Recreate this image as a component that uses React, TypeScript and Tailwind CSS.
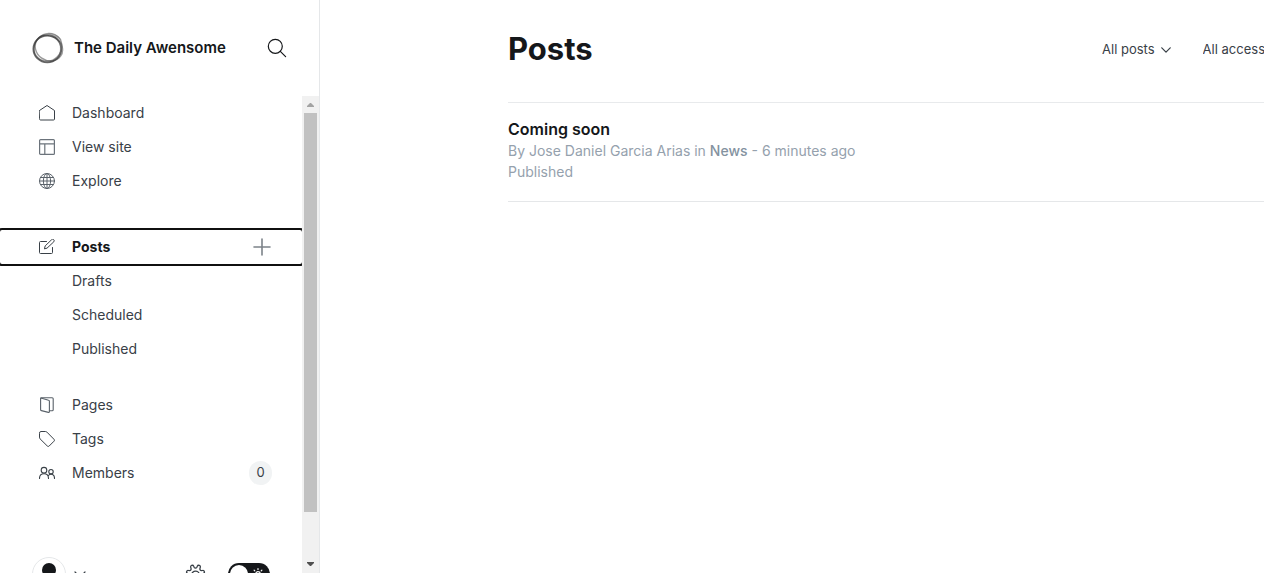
import React from 'react';

type IconProps = { className?: string; children: React.ReactNode; box?: string; weight?: number };

function Icon({ className = 'size-4', children, box = '0 0 16 16', weight = 1 }: IconProps) {
  return (
    <svg
      className={`shrink-0 ${className}`}
      viewBox={box}
      fill="none"
      stroke="currentColor"
      strokeWidth={weight}
      strokeLinecap="round"
      strokeLinejoin="round"
      aria-hidden="true"
    >
      {children}
    </svg>
  );
}

const HomeIcon = () => (
  <Icon>
    <path d="M.5 5.500 8 .5l7.500 5v8.500a1 1 0 0 1-1 1h-13a1 1 0 0 1-1-1Z" />
  </Icon>
);

const LayoutIcon = () => (
  <Icon className="size-4 text-[#6b737b]" weight={1.2}>
    <rect x=".6" y=".6" width="14.800" height="14.800" rx="1" />
    <path d="M.5 4.800h15M5.800 4.800v10.500" />
  </Icon>
);

const GlobeIcon = () => (
  <Icon className="size-4 text-[#5a626a]">
    <circle cx="8" cy="8" r="7.500" />
    <ellipse cx="8" cy="8" rx="3.600" ry="7.500" />
    <path d="M8 .5v15M.5 8h15M1.600 4.500h12.800M1.600 11.500h12.800" />
  </Icon>
);

const EditIcon = () => (
  <Icon className="size-4 text-[#394047]">
    <path d="M7.500 2.500h-6a1 1 0 0 0-1 1v10a1 1 0 0 0 1 1h11a1 1 0 0 0 1-1v-5" />
    <path d="M5.500 9.500 6.200 6.900 12.500.8a1.500 1.500 0 0 1 2.300 2L8.300 8.900Z" />
  </Icon>
);

const PagesIcon = () => (
  <Icon className="size-4 text-[#5a626a]" weight={1.1}>
    <path d="M1.600 1.400v11.200a1 1 0 0 0 .8 1l7 1.800a.8.800 0 0 0 1-.8V4.200a1 1 0 0 0-.8-1L1.900 1Z" />
    <path d="M1.900 1a1 1 0 0 1 .6-.3h10.700a1 1 0 0 1 1 1v11a1 1 0 0 1-1 1h-2.800" />
  </Icon>
);

const TagIcon = () => (
  <Icon>
    <path d="M.5 1.900A1.400 1.400 0 0 1 1.900.5h4.600a2 2 0 0 1 1.400.6l7.100 7.200a1.300 1.300 0 0 1 0 1.900l-4.800 4.800a1.300 1.300 0 0 1-1.900 0L1.100 7.900a2 2 0 0 1-.6-1.400Z" />
  </Icon>
);

const MembersIcon = () => (
  <Icon weight={1.1}>
    <circle cx="5" cy="5.200" r="2.800" />
    <circle cx="12" cy="6.700" r="2.200" />
    <path d="M.5 13.500c0-3 1.900-4.700 4.500-4.700s4.500 1.700 4.500 4.700M9.500 10.500c.6-.8 1.400-1.200 2.500-1.200 2 0 3.500 1.500 3.500 4.200" />
  </Icon>
);

const ChevronIcon = ({ className = '' }: { className?: string }) => (
  <Icon className={`h-1.5 w-2.5 ${className}`} box="0 0 10 6" weight={1.2}>
    <path d="m.8.800 4.200 4.400L9.200.8" />
  </Icon>
);

const RingLogo = () => (
  <svg className="size-8 shrink-0" viewBox="0 0 32 32" fill="none" stroke="#333" aria-hidden="true">
    <ellipse cx="15.300" cy="16.900" rx="13.900" ry="13.400" strokeWidth="1.800" strokeOpacity=".75" />
    <ellipse cx="16.700" cy="15.500" rx="14.300" ry="12.400" strokeWidth="1.400" strokeOpacity=".5" transform="rotate(35 16 16)" />
    <ellipse cx="16.500" cy="15.500" rx="14.500" ry="13.200" strokeWidth="1.200" strokeOpacity=".5" transform="rotate(-45 16 16)" />
    <path d="M16 1.500c6-.6 11 1.500 14 7-3.300-2.600-8-4.400-13-4.700ZM28.500 9c2.500 4.500 2.400 10-1.600 15 1.300-4.600 1.500-9.500.2-13Z" fill="#777" fillOpacity=".6" stroke="none" />
  </svg>
);

type NavItemProps = { label: string; icon?: React.ReactNode };

function NavItem({ label, icon }: NavItemProps) {
  return (
    <li>
      <a href="#" className="flex h-[34px] items-center gap-[17px] pl-[39px]">
        <span className="size-4 shrink-0">{icon}</span>
        <span className="pb-0.5">{label}</span>
      </a>
    </li>
  );
}

function Scrollbar() {
  return (
    <div className="flex w-[17px] shrink-0 flex-col bg-[#f1f1f1]" aria-hidden="true">
      <div className="flex h-[17px] items-center justify-center">
        <svg className="h-1 w-[7px]" viewBox="0 0 7 4" fill="#a3a3a3"><path d="M0 4V3L3 0h1l3 3v1Z" /></svg>
      </div>
      <div className="min-h-0 flex-1 px-0.5">
        <div className="h-[90%] bg-[#c1c1c1]" />
      </div>
      <div className="flex h-[17px] items-center justify-center pb-0.5">
        <svg className="h-1 w-[7px]" viewBox="0 0 7 4" fill="#505050"><path d="M0 0v1l3 3h1l3-3V0Z" /></svg>
      </div>
    </div>
  );
}

function Sidebar() {
  return (
    <aside className="flex w-80 shrink-0 flex-col border-r border-[#e5e7e9]">
      <header className="flex h-24 shrink-0 items-center pr-8 pl-8">
        <RingLogo />
        <span className="ml-2.5 flex-1 text-[15px] font-semibold whitespace-nowrap text-[#15171a]">
          The Daily Awensome
        </span>
        <button type="button" aria-label="Search" className="text-[#15171a]">
          <Icon className="size-5" box="0 0 20 20" weight={1.2}>
            <circle cx="8.300" cy="8.300" r="7" />
            <path d="m13.300 13.300 5.300 5.300" />
          </Icon>
        </button>
      </header>

      <div className="flex min-h-0 flex-1">
        <div className="min-w-0 flex-1 overflow-hidden text-[14px] text-[#394047]">
          <nav>
            <ul>
              <NavItem label="Dashboard" icon={<HomeIcon />} />
              <NavItem label="View site" icon={<LayoutIcon />} />
              <NavItem label="Explore" icon={<GlobeIcon />} />
            </ul>
            <ul className="mt-8">
              <li className="flex h-[34px] items-center rounded-xs pr-[31px] outline-2 outline-[#101010]">
                <a href="#" className="flex flex-1 items-center gap-[17px] pl-[39px] font-bold text-[#15171a]">
                  <EditIcon />
                  <span className="pb-0.5">Posts</span>
                </a>
                <button type="button" aria-label="New post" className="text-[#7c8389]">
                  <Icon className="size-[18px]" box="0 0 18 18" weight={1.6}>
                    <path d="M9 1v16M1 9h16" />
                  </Icon>
                </button>
              </li>
              <NavItem label="Drafts" />
              <NavItem label="Scheduled" />
              <NavItem label="Published" />
            </ul>
            <ul className="mt-[22px]">
              <NavItem label="Pages" icon={<PagesIcon />} />
              <NavItem label="Tags" icon={<TagIcon />} />
              <li className="flex h-[34px] items-center pr-[30px]">
                <a href="#" className="flex flex-1 items-center gap-[17px] pl-[39px]">
                  <MembersIcon />
                  <span className="pb-0.5">Members</span>
                </a>
                <span className="flex h-6 min-w-[23px] items-center justify-center rounded-full bg-[#f1f3f4] text-[13px]">0</span>
              </li>
            </ul>
          </nav>

          <footer className="mt-[67px] flex items-center pr-8 pb-6 pl-8">
            <button type="button" aria-label="Account" className="flex items-center gap-2">
              <svg className="size-[34px]" viewBox="0 0 34 34" aria-hidden="true">
                <circle cx="17" cy="17" r="16.500" fill="#fff" stroke="#e5e7e9" />
                <circle cx="17" cy="13" r="7" fill="#15171a" />
                <path d="M5 28a13 8 0 0 1 24 0 16 16 0 0 1-24 0Z" fill="#15171a" />
              </svg>
              <Icon className="h-[7px] w-3 text-[#394047]" box="0 0 12 7" weight={1.2}>
                <path d="m1 1 5 5 5-5" />
              </Icon>
            </button>
            <button type="button" aria-label="Settings" className="ml-auto text-[#394047]">
              <Icon className="size-[21px]" box="0 0 20 20" weight={1.2}>
                <path d="m8.300 2.200.5 1a1.400 1.400 0 0 0 2.400 0l.5-1a1.500 1.500 0 0 1 2.800 1.100l-.3 1.200a1.400 1.400 0 0 0 1.400 1.700l1.200-.1a1.500 1.500 0 0 1 .7 2.900l-1 .4a1.400 1.400 0 0 0 0 2.400l1 .6a1.500 1.500 0 0 1-.7 2.700l-1.200-.1a1.400 1.400 0 0 0-1.400 1.700l.3 1.100a1.500 1.500 0 0 1-2.800 1.100l-.5-1a1.400 1.400 0 0 0-2.400 0l-.5 1a1.500 1.500 0 0 1-2.800-1.100l.3-1.100A1.400 1.400 0 0 0 4.400 15l-1.200.1a1.500 1.500 0 0 1-.7-2.700l1-.6a1.400 1.400 0 0 0 0-2.400l-1-.4a1.500 1.500 0 0 1 .7-2.900l1.200.1a1.400 1.400 0 0 0 1.400-1.700l-.3-1.200a1.500 1.500 0 0 1 2.800-1.100Z" />
                <circle cx="10" cy="10.500" r="3.700" />
              </Icon>
            </button>
            <button
              type="button"
              role="switch"
              aria-checked="false"
              aria-label="Night mode"
              className="ml-[22px] flex h-[22px] w-[42px] items-center justify-between rounded-full bg-[#15171a] pr-[5px] pl-0.5 text-white"
            >
              <span className="size-[18px] rounded-full bg-white" />
              <Icon className="size-3.5" box="0 0 14 14" weight={1.2}>
                <circle cx="7" cy="7" r="2.300" />
                <path d="M7 1.500v1M7 11.500v1M1.500 7h1M11.500 7h1M3.100 3.100l.7.7M10.200 10.200l.7.7M3.100 10.900l.7-.7M10.200 3.800l.7-.7" />
              </Icon>
            </button>
          </footer>
        </div>
        <Scrollbar />
      </div>
    </aside>
  );
}

function Filter({ label }: { label: string }) {
  return (
    <label className="flex items-center gap-1.5 text-[13px] text-[#394047]">
      <select aria-label={label} className="field-sizing-content cursor-pointer appearance-none bg-transparent">
        <option>{label}</option>
      </select>
      <ChevronIcon />
    </label>
  );
}

export default function App() {
  return (
    <div className="flex h-screen overflow-hidden bg-white font-['Inter',sans-serif] text-[#15171a]">
      <Sidebar />
      <main className="min-w-0 flex-1 overflow-hidden pl-[188px]">
        <header className="flex h-[102px] items-center justify-between pb-[3px]">
          <h1 className="text-[31px] font-bold">Posts</h1>
          <div className="-mr-[17px] flex gap-8">
            <Filter label="All posts" />
            <Filter label="All access" />
          </div>
        </header>
        <ol className="border-t border-[#e8eaec]">
          <li className="border-b border-[#e5e7e9] pt-[15px] pb-[19px]">
            <a href="#" className="block">
              <h3 className="text-[16px] leading-[22px] font-semibold">Coming soon</h3>
              <p className="text-[14px] leading-[21px] text-[#95a1ad]">
                By Jose Daniel Garcia Arias in <span className="font-medium text-[#8492a0]">News</span> - 6 minutes ago
              </p>
              <p className="text-[14px] leading-[21px] text-[#95a1ad]">Published</p>
            </a>
          </li>
        </ol>
      </main>
    </div>
  );
}
